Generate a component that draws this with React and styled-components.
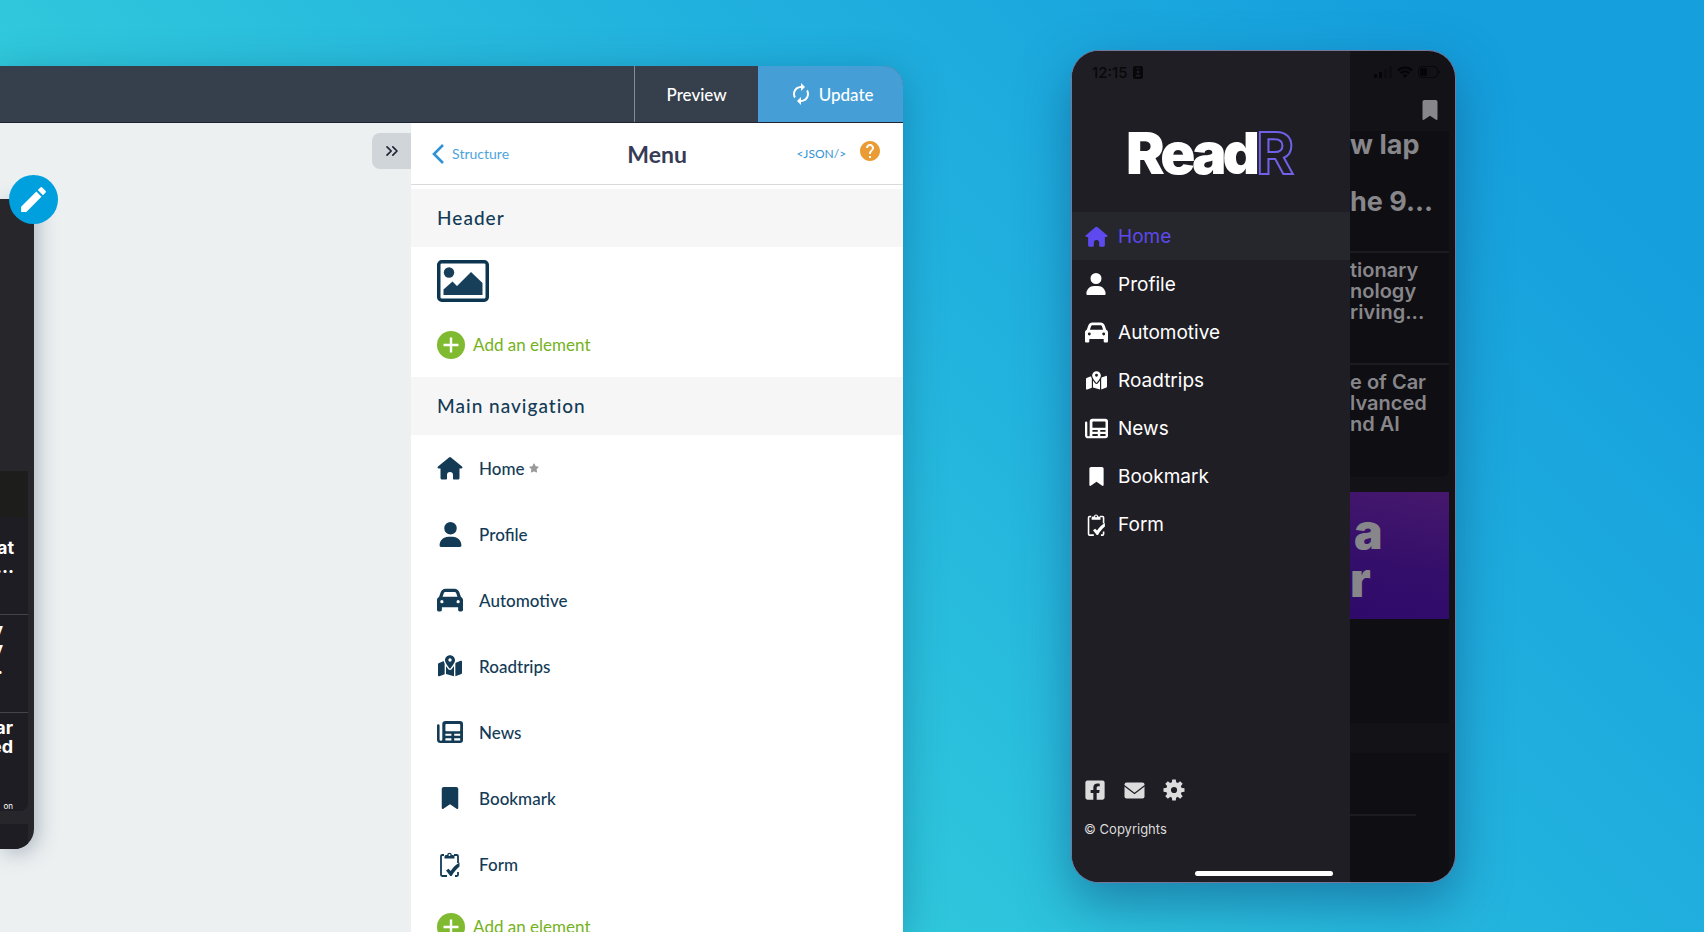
import React from 'react';
import styled, { createGlobalStyle, css } from 'styled-components';
import { FaUser, FaCar, FaMapLocationDot, FaBookmark, FaStar } from 'react-icons/fa6';
import { FaFacebookSquare } from 'react-icons/fa';
import { MdAutorenew, MdEdit, MdHelp } from 'react-icons/md';
import { ChevronsRight } from 'lucide-react';

const GlobalStyle = createGlobalStyle`
  *, *::before, *::after { box-sizing: border-box; }
  body { margin: 0; }
  button { border: 0; padding: 0; background: none; font: inherit; color: inherit; cursor: pointer; }
  a { color: inherit; text-decoration: none; }
  h1, h2, p { margin: 0; padding: 0; }
  svg { display: block; flex: none; }
`;

const Stage = styled.main`
  display: grid;
  grid-template-columns: 53% 1fr;
  height: 100vh;
  min-height: 900px;
  overflow: hidden;
  background: linear-gradient(45deg, #30c8dc 34%, #22b2de 60%, #159fdd 89%);
`;

/* ---------- editor ---------- */

const Editor = styled.section`
  display: flex;
  flex-direction: column;
  min-height: 0;
  margin-top: 66px;
  overflow: hidden;
  border-top-right-radius: 20px;
  background: #ecf0f1;
  box-shadow: 0 8px 40px rgba(10, 60, 100, 0.35);
  font-family: Lato, "Liberation Sans", sans-serif;
`;

const Toolbar = styled.header`
  display: flex;
  justify-content: flex-end;
  height: 57px;
  flex: none;
  background: #363f4c;
  border-bottom: 1px solid #1f2433;
`;

const ToolbarButton = styled.button`
  display: flex;
  align-items: center;
  justify-content: center;
  gap: 6px;
  width: ${({ $primary }) => ($primary ? 145 : 124)}px;
  border-left: 1px solid ${({ $primary }) => ($primary ? '#4a9fd8' : '#838a94')};
  background: ${({ $primary }) => ($primary ? '#459ed6' : 'transparent')};
  color: #fff;
  font-size: 17px;
  font-weight: 500;
`;

const Workspace = styled.div`
  display: flex;
  flex: 1;
  min-height: 0;
`;

const Canvas = styled.div`
  display: flex;
  flex: 1;
  align-items: flex-start;
  justify-content: space-between;
  min-width: 0;
`;

const Device = styled.div`
  position: relative;
  width: 34px;
  margin-top: 76px;
`;

const DeviceScreen = styled.div`
  display: flex;
  flex-direction: column;
  height: 650px;
  overflow: hidden;
  border-radius: 0 12px 20px 0;
  background: #27262b;
  box-shadow: 4px 4px 20px rgba(60, 80, 110, 0.35);
  color: #fff;
  font-family: Inter, "Liberation Sans", sans-serif;
`;

const DeviceHero = styled.div`
  height: 272px;
`;

const DeviceBanner = styled.div`
  height: 46px;
  margin-right: 6px;
  background: #1d1d1c;
`;

const DeviceCard = styled.div`
  display: flex;
  flex-direction: column;
  justify-content: ${({ $last }) => ($last ? 'space-between' : 'flex-start')};
  align-items: flex-end;
  height: 98px;
  margin-right: 6px;
  padding: ${({ $top }) => $top}px ${({ $inset }) => $inset}px 0 0;
  border-bottom: ${({ $last }) => ($last ? '0' : '1px solid #45444a')};
  border-radius: ${({ $last }) => ($last ? '0 0 8px 0' : '0')};
  background: #1e1d23;
`;

const DeviceTitle = styled.p`
  font-size: 18px;
  font-weight: 700;
  line-height: 19px;
  white-space: nowrap;
  text-align: right;
`;

const DeviceCaption = styled.p`
  font-size: 8px;
  line-height: 10px;
`;

const DeviceFooter = styled.div`
  flex: 1;
  margin: 13px 6px 0 0;
  background: #1e1d23;
`;

const EditButton = styled.button`
  position: absolute;
  top: -24px;
  right: -24px;
  display: grid;
  place-items: center;
  width: 49px;
  height: 49px;
  border-radius: 50%;
  background: #009fdd;
  color: #fff;
`;

const CollapseButton = styled.button`
  display: grid;
  place-items: center;
  width: 39px;
  height: 36px;
  margin-top: 10px;
  border-radius: 8px 0 0 8px;
  background: #d0d5d9;
  color: #1d2233;
`;

const Panel = styled.aside`
  display: flex;
  flex-direction: column;
  width: 492px;
  flex: none;
  background: #fff;
  color: #133b56;
`;

const PanelHeader = styled.div`
  display: grid;
  grid-template-columns: 1fr auto 1fr;
  align-items: center;
  height: 62px;
  flex: none;
  margin-bottom: 4px;
  padding: 0 21px;
  border-bottom: 1px solid #d9dadc;
`;

const BackLink = styled.a`
  display: flex;
  align-items: center;
  gap: 8px;
  color: #4da4dc;
  font-size: 14px;
  line-height: 20px;
`;

const PanelTitle = styled.h1`
  color: #373b55;
  font-size: 23px;
  line-height: 28px;
  font-weight: 700;
`;

const PanelTools = styled.div`
  display: flex;
  align-items: center;
  justify-content: flex-end;
  gap: 12px;
  color: #3494d6;
  font-size: 12px;
  line-height: 20px;
`;

const HelpButton = styled.button`
  color: #eb9b33;
  padding-bottom: 5px;
`;

const SectionTitle = styled.h2`
  display: flex;
  align-items: center;
  height: 58px;
  flex: none;
  padding: 0 26px 2px;
  background: #f6f6f6;
  font-size: 19px;
  font-weight: 500;
  letter-spacing: 1px;
`;

const HeaderSection = styled.div`
  display: flex;
  flex-direction: column;
  align-items: flex-start;
  height: 130px;
  flex: none;
  padding: 13px 26px 0;
  gap: 29px;
`;

const AddButton = styled.button`
  display: flex;
  align-items: center;
  gap: 8px;
  color: #74b21c;
  font-size: 17px;
  line-height: 28px;
`;

const NavEditor = styled.div`
  display: flex;
  flex-direction: column;
  gap: 16px;
  flex: none;
  padding: 0 26px;
`;

const NavEditorLink = styled.a`
  display: flex;
  align-items: center;
  height: 66px;
  font-size: 17px;
  font-weight: 500;
  gap: 4px;
`;

const IconSlot = styled.span`
  display: grid;
  place-items: center;
  width: ${({ $wide }) => ($wide ? 26 : 24)}px;
  margin-right: ${({ $wide }) => ($wide ? 12 : 10)}px;
  flex: none;
`;

/* ---------- phone ---------- */

const PhoneArea = styled.section`
  display: flex;
  justify-content: center;
  align-items: flex-start;
  padding: 50px 80px 0 0;
`;

const Phone = styled.div`
  display: flex;
  width: 385px;
  aspect-ratio: 385 / 833;
  position: relative;
  overflow: hidden;
  border: 1px solid #77779c;
  border-radius: 28px;
  background: #131217;
  box-shadow: 0 20px 50px rgba(15, 70, 120, 0.5);
  font-family: Inter, "Liberation Sans", sans-serif;
`;

const Drawer = styled.div`
  display: flex;
  flex-direction: column;
  width: 278px;
  flex: none;
  background: #1f1e24;
  color: #fff;
`;

const StatusBar = styled.div`
  display: flex;
  align-items: center;
  gap: 5px;
  height: 22px;
  flex: none;
  margin-top: 10px;
  padding: 0 ${({ $right }) => ($right ? 14 : 20)}px;
  justify-content: ${({ $right }) => ($right ? 'flex-end' : 'flex-start')};
  color: #08080a;
  font-size: 15px;
  font-weight: 500;
`;

const Logo = styled.div`
  display: flex;
  justify-content: center;
  height: 129px;
  padding: 35px 6px 0 0;
  font-size: 58px;
  line-height: 70px;
  font-weight: 900;
  letter-spacing: -4px;
`;

const LogoAccent = styled.span`
  color: transparent;
  font-weight: 700;
  -webkit-text-stroke: 2px #6f61e8;
`;

const DrawerLink = styled.a`
  display: flex;
  align-items: center;
  height: 48px;
  padding-left: 12px;
  font-size: 19px;
  ${({ $active }) => $active && css`
    background: #26272c;
    color: #5d49ee;
  `}
`;

const DrawerFooter = styled.footer`
  display: flex;
  flex-direction: column;
  gap: 18px;
  margin-top: auto;
  padding: 0 12px 43px;
  color: #dcdcdd;
  font-size: 13px;
  line-height: 20px;
`;

const SocialLinks = styled.div`
  display: flex;
  align-items: center;
  gap: 18px;
`;

const HomeIndicator = styled.span`
  position: absolute;
  bottom: 6px;
  left: 50%;
  width: 138px;
  height: 5px;
  transform: translateX(-50%);
  border-radius: 3px;
  background: #fff;
`;

const Feed = styled.div`
  display: flex;
  flex-direction: column;
  flex: 1;
  min-width: 0;
  overflow: hidden;
  color: #87868a;
`;

const FeedTools = styled.div`
  display: flex;
  justify-content: flex-end;
  height: 48px;
  flex: none;
  padding: 17px 15px 0 0;
`;

const FeedCard = styled.div`
  height: ${({ $height }) => $height}px;
  flex: none;
  margin-right: 6px;
  border-bottom: ${({ $ruled }) => ($ruled ? '2px solid #1c1b20' : '0')};
  border-radius: ${({ $rounded }) => ($rounded ? '0 0 8px 0' : '0')};
  background: #0f0e13;
  white-space: nowrap;
  overflow: hidden;
`;

const HeadlineStack = styled.div`
  display: flex;
  flex-direction: column;
  gap: 29px;
`;

const Headline = styled.p`
  font-size: 27px;
  line-height: 28px;
  font-weight: 700;
`;

const FeedTitle = styled.p`
  padding-top: 7px;
  font-size: 20px;
  line-height: 21px;
  font-weight: 600;
`;

const Promo = styled.div`
  height: 127px;
  flex: none;
  margin: 15px 6px 0 0;
  padding-top: 16px;
  background: linear-gradient(190deg, #46186d, #330e6a 60%, #300a6b);
`;

const PromoLine = styled.p`
  padding-left: ${({ $indent }) => ($indent ? 4 : 0)}px;
  font-size: 48px;
  line-height: 48px;
  font-weight: 900;
`;

const FeedGap = styled.div`
  height: 30px;
  flex: none;
`;

const FeedRule = styled.div`
  height: 63px;
  width: 66px;
  border-bottom: 2px solid #1c1b20;
`;

/* ---------- icons ---------- */

const HouseIcon = ({ size }) => (
  <svg width={size} height={size} viewBox="0 0 26 26" fill="currentColor" aria-hidden="true">
    <path d="M12 2.4 1 11.6c-.9.8-.5 2 .7 2H3.5V23c0 .9.6 1.5 1.5 1.5h4c.6 0 1-.4 1-1V20a3 3 0 0 1 6 0v3.500c0 .6.4 1 1 1h4c.9 0 1.500-.6 1.500-1.500v-9.400h1.800c1.200 0 1.600-1.200.7-2L14 2.400a1.600 1.600 0 0 0-2 0Z" />
  </svg>
);

const NewsIcon = ({ size }) => (
  <svg width={size} height={size} viewBox="0 0 26 26" fill="currentColor" aria-hidden="true">
    <path
      fillRule="evenodd"
      d="M9 2h14a3 3 0 0 1 3 3v16a3 3 0 0 1-3 3H3.500A3.500 3.500 0 0 1 0 20.500V6.500a1.300 1.300 0 0 1 2.600 0V20.500a1.200 1.200 0 0 0 2.700 0V5A3 3 0 0 1 9 2Zm-.6 3.800v5.700q0 .7.7.7h13.400q.7 0 .7-.7V5.800q0-.8-.7-.8H9.100q-.7 0-.7.8ZM8.400 14.700v2h6v-2Zm8.800 0v2h6v-2ZM8.400 19.200v2.200h6v-2.200Zm8.800 0v2.200h6v-2.200Z"
    />
  </svg>
);

const FormIcon = ({ size }) => (
  <svg width={size} height={size} viewBox="0 0 26 26" fill="none" stroke="currentColor" aria-hidden="true">
    <path d="M7 4H5.200Q4 4 4 5.200v18.600Q4 25 5.200 25H10M17 4h2.800Q21 4 21 5.200V12M21 21v2.800q0 1.200-1.200 1.200H18" strokeWidth="1.800" />
    <path
      d="M7.500 7.500V5.500Q7.500 4 9 4h1.200a2.300 2.300 0 0 1 4.600 0H16q1.500 0 1.500 1.500v2ZM12.500 2.900a1 1 0 1 0 0 2 1 1 0 0 0 0-2Z"
      fill="currentColor"
      fillRule="evenodd"
      stroke="none"
    />
    <path d="M9 19.500l2.500-1.800 2.200 2.200c2-3 4.500-6 8.800-8.500v4c-3.500 3-5.600 5.600-7.800 9.600h-1.400Z" fill="currentColor" stroke="none" />
  </svg>
);

const MailIcon = () => (
  <svg width="21" height="21" viewBox="0 0 21 21" aria-hidden="true">
    <rect x="0.500" y="2.500" width="20" height="16" rx="2" fill="currentColor" />
    <path d="M0 5.500 10.500 13.500 21 5.500" fill="none" stroke="#1f1e24" strokeWidth="1.300" />
  </svg>
);

const ImageIcon = () => (
  <svg width="52" height="42" viewBox="0 0 52 42" aria-hidden="true">
    <rect x="1.750" y="1.750" width="48.500" height="38.500" rx="3" fill="none" stroke="#0c3550" strokeWidth="3.500" />
    <circle cx="12" cy="12.500" r="5.200" fill="#183f59" />
    <path d="M6.500 35v-5.500l9-8 4.500 4.500L34 12l11.500 11v12Z" fill="#183f59" />
  </svg>
);

const PlusIcon = () => (
  <svg width="28" height="28" viewBox="0 0 28 28" aria-hidden="true">
    <circle cx="14" cy="14" r="14" fill="#7fba31" />
    <path d="M14 6.500v15M6.500 14h15" stroke="#fff" strokeWidth="2.400" />
  </svg>
);

const BackIcon = () => (
  <svg width="12" height="20" viewBox="0 0 12 20" fill="none" stroke="#2f92d6" strokeWidth="2.600" aria-hidden="true">
    <path d="M11 1 2 10l9 9" />
  </svg>
);

const GearIcon = () => (
  <svg width="22" height="22" viewBox="0 0 22 22" fill="currentColor" aria-hidden="true">
    {[0, 45, 90, 135].map((angle) => (
      <path key={angle} d="M9.200 0.500h3.600l.5 4h-4.600ZM8.700 17.500h4.600l-.5 4H9.200Z" transform={`rotate(${angle} 11 11)`} />
    ))}
    <circle cx="11" cy="11" r="5.500" fill="none" stroke="currentColor" strokeWidth="4.800" />
  </svg>
);

const BadgeIcon = () => (
  <svg width="10" height="13" viewBox="0 0 10 13" aria-hidden="true">
    <rect width="10" height="13" rx="2" fill="#08080a" />
    <circle cx="5" cy="6" r="1.400" fill="#1f1e24" />
    <path d="M2.500 10.500a2.500 2 0 0 1 5 0ZM3.500 1.700h3v1h-3Z" fill="#1f1e24" />
  </svg>
);

const SignalIcon = () => (
  <svg width="18" height="12" viewBox="0 0 18 12" aria-hidden="true">
    <rect x="0" y="8" width="3" height="4" rx="1" fill="#050507" />
    <rect x="5" y="6" width="3" height="6" rx="1" fill="#050507" />
    <rect x="10" y="3" width="3" height="9" rx="1" fill="#0e0e11" />
    <rect x="15" y="0" width="3" height="12" rx="1" fill="#0e0e11" />
  </svg>
);

const WifiIcon = () => (
  <svg width="16" height="12" viewBox="0 0 16 12" fill="none" stroke="#050507" strokeWidth="2.200" aria-hidden="true">
    <path d="M1 4.500a10 10 0 0 1 14 0M3.600 7.200a6.200 6.200 0 0 1 8.800 0" />
    <path d="M8 11.800 5.800 9.500a3 3 0 0 1 4.400 0Z" fill="#050507" stroke="none" />
  </svg>
);

const BatteryIcon = () => (
  <svg width="23" height="12" viewBox="0 0 23 12" aria-hidden="true">
    <rect x="0.500" y="0.500" width="19" height="11" rx="3.500" fill="none" stroke="#08080a" />
    <rect x="2" y="2" width="7" height="8" rx="2" fill="#050507" />
    <path d="M21 4v4q1.500-.5 1.500-2T21 4Z" fill="#08080a" />
  </svg>
);

const pages = [
  { name: 'Home', Icon: HouseIcon, size: 26 },
  { name: 'Profile', Icon: FaUser, size: 25 },
  { name: 'Automotive', Icon: FaCar, size: 26 },
  { name: 'Roadtrips', Icon: FaMapLocationDot, size: 24 },
  { name: 'News', Icon: NewsIcon, size: 26 },
  { name: 'Bookmark', Icon: FaBookmark, size: 22 },
  { name: 'Form', Icon: FormIcon, size: 26 },
];

const DevicePreview = () => (
  <Device>
    <DeviceScreen>
      <DeviceHero />
      <DeviceBanner />
      <DeviceCard $top={21} $inset={14}>
        <DeviceTitle>at<br />g…</DeviceTitle>
      </DeviceCard>
      <DeviceCard $top={5} $inset={25}>
        <DeviceTitle>y<br />y<br />…</DeviceTitle>
      </DeviceCard>
      <DeviceCard $top={5} $inset={15} $last>
        <DeviceTitle>ar<br />ed</DeviceTitle>
        <DeviceCaption>on</DeviceCaption>
      </DeviceCard>
      <DeviceFooter />
    </DeviceScreen>
    <EditButton type="button" aria-label="Edit"><MdEdit size={33} /></EditButton>
  </Device>
);

const AddElement = () => (
  <AddButton type="button"><PlusIcon />Add an element</AddButton>
);

const MenuPanel = () => (
  <Panel>
    <PanelHeader>
      <BackLink href="#structure"><BackIcon />Structure</BackLink>
      <PanelTitle>Menu</PanelTitle>
      <PanelTools>
        <a href="#json">&lt;JSON/&gt;</a>
        <HelpButton type="button" aria-label="Help"><MdHelp size={24} /></HelpButton>
      </PanelTools>
    </PanelHeader>
    <SectionTitle>Header</SectionTitle>
    <HeaderSection>
      <ImageIcon />
      <AddElement />
    </HeaderSection>
    <SectionTitle>Main navigation</SectionTitle>
    <NavEditor>
      <nav>
        {pages.map(({ name, Icon, size }) => (
          <NavEditorLink href="#page" key={name}>
            <IconSlot $wide><Icon size={size} /></IconSlot>
            {name}
            {name === 'Home' && <FaStar size={10} color="#999" />}
          </NavEditorLink>
        ))}
      </nav>
      <AddElement />
    </NavEditor>
  </Panel>
);

const PhonePreview = () => (
  <Phone>
    <Drawer>
      <StatusBar>12:15<BadgeIcon /></StatusBar>
      <Logo>Read<LogoAccent>R</LogoAccent></Logo>
      <nav>
        {pages.map(({ name, Icon, size }) => (
          <DrawerLink href="#page" key={name} $active={name === 'Home'}>
            <IconSlot><Icon size={size - 3} /></IconSlot>
            {name}
          </DrawerLink>
        ))}
      </nav>
      <DrawerFooter>
        <SocialLinks>
          <a href="#facebook" aria-label="Facebook"><FaFacebookSquare size={22} /></a>
          <a href="#mail" aria-label="Mail"><MailIcon /></a>
          <a href="#settings" aria-label="Settings"><GearIcon /></a>
        </SocialLinks>
        <p>© Copyrights</p>
      </DrawerFooter>
    </Drawer>
    <Feed>
      <StatusBar $right><SignalIcon /><WifiIcon /><BatteryIcon /></StatusBar>
      <FeedTools><FaBookmark size={20} /></FeedTools>
      <FeedCard $height={122} $ruled>
        <HeadlineStack>
          <Headline>w lap</Headline>
          <Headline>he 9...</Headline>
        </HeadlineStack>
      </FeedCard>
      <FeedCard $height={112} $ruled>
        <FeedTitle>tionary<br />nology<br />riving...</FeedTitle>
      </FeedCard>
      <FeedCard $height={112} $rounded>
        <FeedTitle>e of Car<br />lvanced<br />nd AI</FeedTitle>
      </FeedCard>
      <Promo>
        <PromoLine $indent>a</PromoLine>
        <PromoLine>r</PromoLine>
      </Promo>
      <FeedCard $height={104} />
      <FeedGap />
      <FeedCard $height={130}><FeedRule /></FeedCard>
    </Feed>
    <HomeIndicator />
  </Phone>
);

export default function App() {
  return (
    <>
      <GlobalStyle />
      <Stage>
        <Editor>
          <Toolbar>
            <ToolbarButton type="button">Preview</ToolbarButton>
            <ToolbarButton type="button" $primary><MdAutorenew size={24} />Update</ToolbarButton>
          </Toolbar>
          <Workspace>
            <Canvas>
              <DevicePreview />
              <CollapseButton type="button" aria-label="Collapse panel"><ChevronsRight size={20} /></CollapseButton>
            </Canvas>
            <MenuPanel />
          </Workspace>
        </Editor>
        <PhoneArea>
          <PhonePreview />
        </PhoneArea>
      </Stage>
    </>
  );
}
